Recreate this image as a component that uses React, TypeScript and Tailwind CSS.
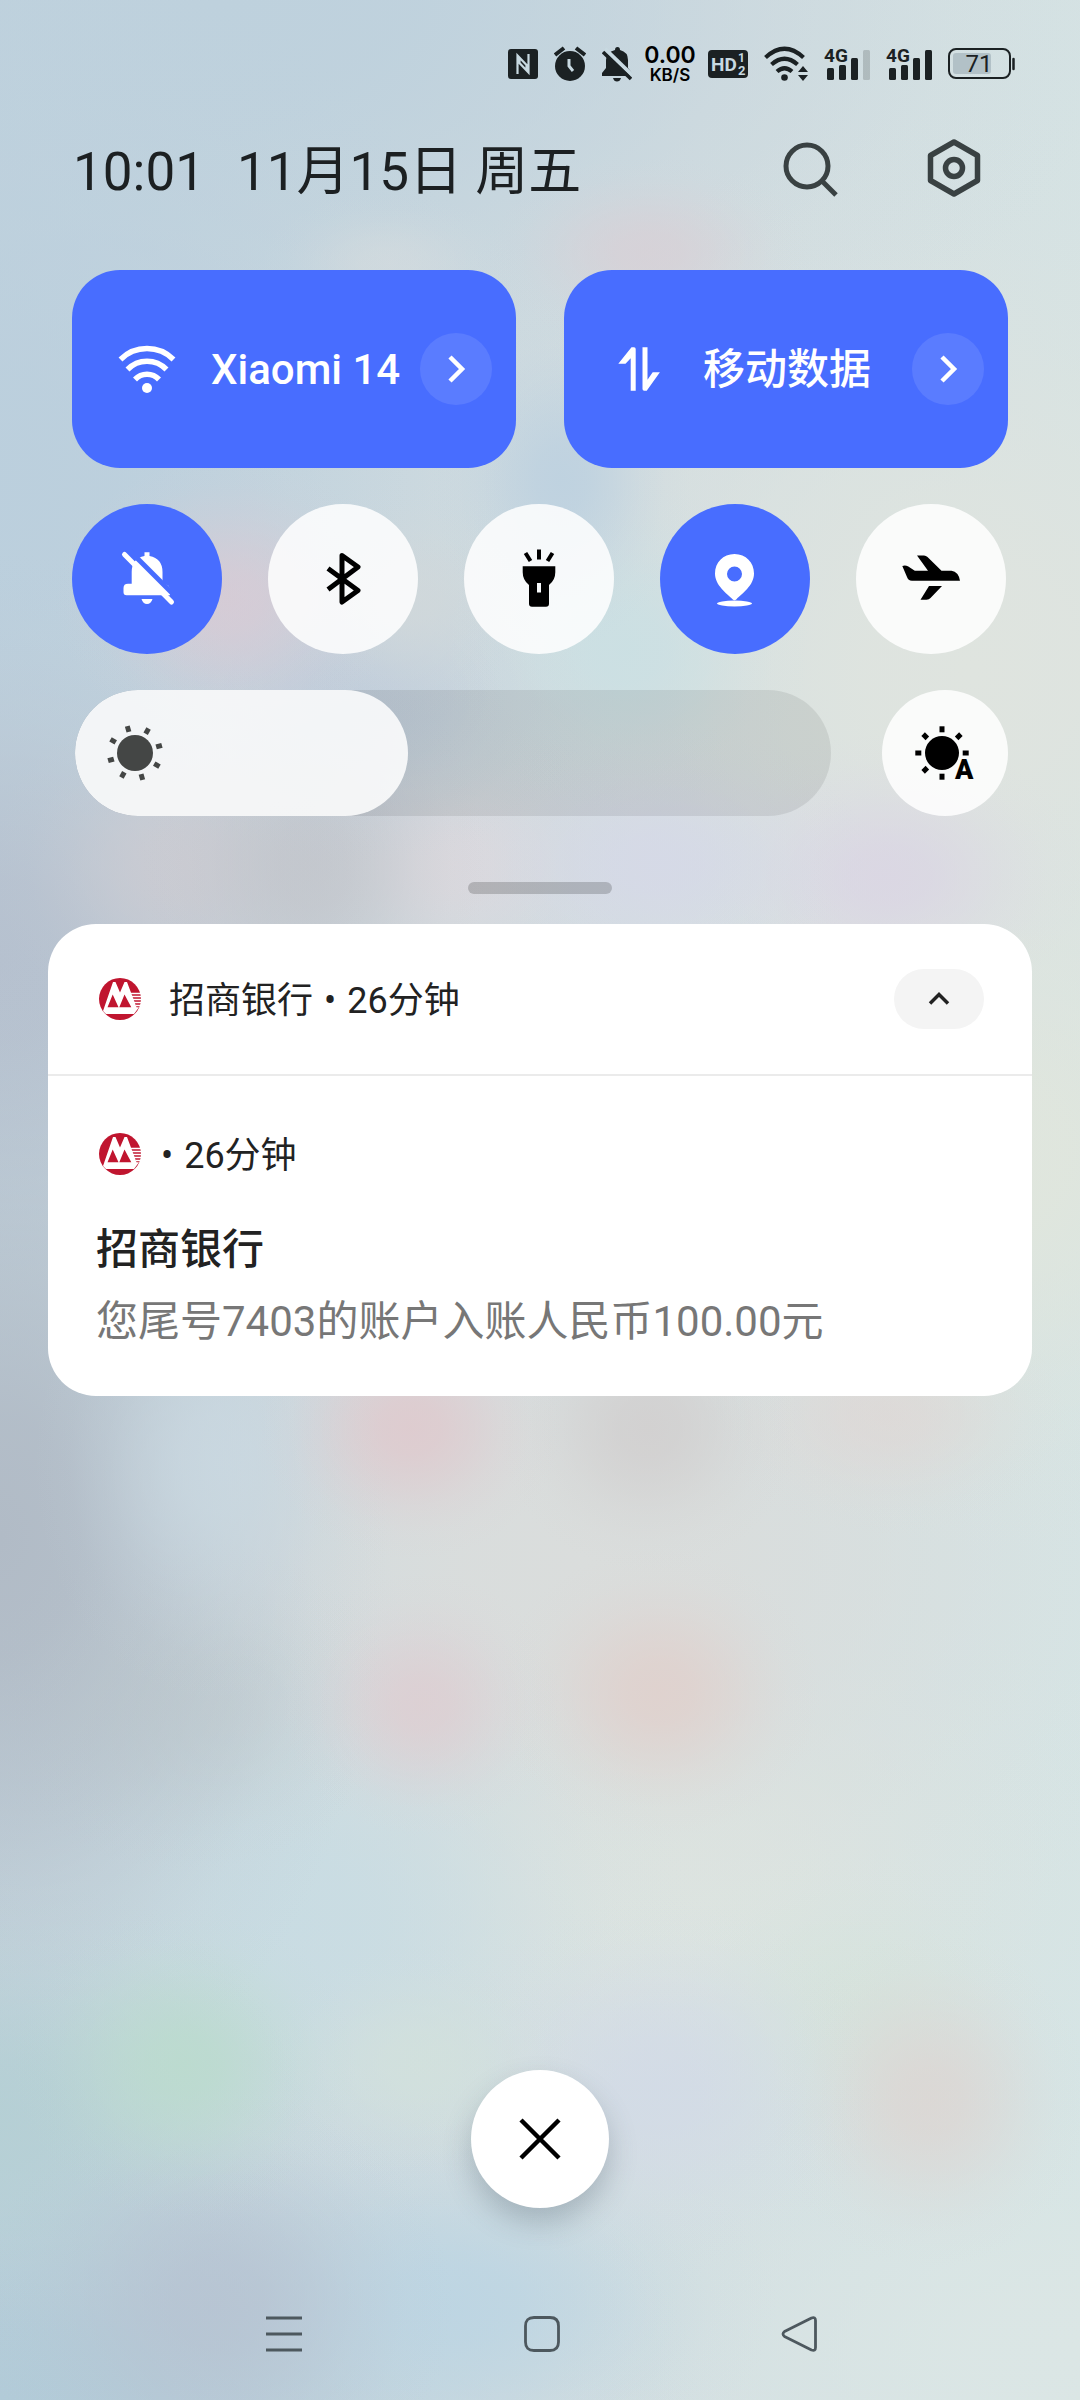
import { useState, type ReactNode } from "react";

type Blob = { x: number; y: number; rx: number; ry: number; rgb: string; a: number };

// Soft colour spots of the frosted wallpaper; x, y, rx, ry are percentages of the screen.
const blobs: Blob[] = [
  { x: 60, y: 10.5, rx: 15, ry: 4, rgb: "216,208,214", a: 0.8 },
  { x: 36, y: 11, rx: 12, ry: 3, rgb: "214,220,222", a: 0.6 },
  { x: 52, y: 20, rx: 12, ry: 7, rgb: "189,209,224", a: 0.9 },
  { x: 58, y: 27, rx: 17, ry: 7, rgb: "200,224,228", a: 0.75 },
  { x: 21, y: 25, rx: 16, ry: 6, rgb: "218,202,212", a: 0.8 },
  { x: 38, y: 25, rx: 13, ry: 5, rgb: "209,216,218", a: 0.8 },
  { x: 33, y: 29, rx: 22, ry: 7, rgb: "188,200,217", a: 0.6 },
  { x: 61, y: 36, rx: 20, ry: 6, rgb: "213,216,232", a: 0.8 },
  { x: 82, y: 36.5, rx: 19, ry: 6, rgb: "218,212,228", a: 0.8 },
  { x: 29, y: 36, rx: 16, ry: 9, rgb: "193,195,201", a: 0.75 },
  { x: 17, y: 36, rx: 18, ry: 7, rgb: "205,203,209", a: 0.8 },
  { x: 42, y: 36, rx: 17, ry: 6, rgb: "221,216,221", a: 0.8 },
  { x: 38, y: 59.5, rx: 14, ry: 5.5, rgb: "223,201,205", a: 0.85 },
  { x: 60, y: 59.5, rx: 14, ry: 6, rgb: "208,205,205", a: 0.75 },
  { x: 82, y: 59, rx: 17, ry: 5, rgb: "223,214,212", a: 0.65 },
  { x: 39, y: 71, rx: 13, ry: 5.5, rgb: "222,205,209", a: 0.8 },
  { x: 61, y: 70.5, rx: 15, ry: 6, rgb: "224,208,204", a: 0.85 },
  { x: 20, y: 61, rx: 17, ry: 10, rgb: "202,217,226", a: 0.8 },
  { x: 17, y: 71, rx: 20, ry: 7, rgb: "184,195,200", a: 0.45 },
  { x: 17, y: 86, rx: 16, ry: 6.5, rgb: "187,219,206", a: 0.9 },
  { x: 39, y: 86, rx: 15, ry: 5, rgb: "210,225,220", a: 0.8 },
  { x: 61, y: 87, rx: 21, ry: 8, rgb: "210,218,231", a: 0.8 },
  { x: 86, y: 87.5, rx: 15, ry: 7, rgb: "220,214,211", a: 0.85 },
  { x: 79, y: 84, rx: 18, ry: 7, rgb: "213,227,219", a: 0.75 },
  { x: 20, y: 96, rx: 22, ry: 9, rgb: "182,194,209", a: 0.8 },
  { x: 42, y: 96, rx: 30, ry: 8, rgb: "188,213,227", a: 0.9 },
  { x: 0, y: 88, rx: 28, ry: 10, rgb: "180,207,212", a: 0.9 },
  { x: 0, y: 64, rx: 36, ry: 25, rgb: "177,187,198", a: 1 },
  { x: 28, y: 80, rx: 36, ry: 14, rgb: "200,220,227", a: 0.9 },
  { x: 0, y: 40, rx: 34, ry: 17, rgb: "182,193,207", a: 1 },
  { x: 0, y: 20, rx: 50, ry: 22, rgb: "187,207,221", a: 0.95 },
  { x: 20, y: 0, rx: 85, ry: 20, rgb: "190,209,221", a: 1 },
  { x: 0, y: 100, rx: 65, ry: 16, rgb: "178,203,216", a: 1 },
  { x: 100, y: 98, rx: 50, ry: 12, rgb: "219,230,229", a: 1 },
  { x: 90, y: 28, rx: 50, ry: 24, rgb: "223,228,223", a: 1 },
  { x: 92, y: 48, rx: 36, ry: 17, rgb: "224,230,221", a: 1 },
  { x: 55, y: 65, rx: 60, ry: 20, rgb: "218,221,220", a: 1 },
  { x: 62, y: 78, rx: 50, ry: 13, rgb: "221,229,225", a: 1 },
];

// Bell-shaped fade from the centre of a spot to its edge: [distance %, strength].
const fade = [[0, 1], [20, 0.9], [40, 0.62], [60, 0.3], [80, 0.08], [100, 0]];

const wallpaper = blobs
  .map((b) => {
    const stops = fade.map(([at, k]) => `rgba(${b.rgb},${(b.a * k).toFixed(3)}) ${at}%`).join(",");
    return `radial-gradient(${b.rx}% ${b.ry}% at ${b.x}% ${b.y}%, ${stops})`;
  })
  .join(",");

function StatusBar() {
  return (
    <div className="flex h-10 items-center justify-end gap-4 pr-[65px] text-[#1b2123]">
      <svg width="30" height="30" viewBox="0 0 30 30" aria-label="NFC">
        <rect width="30" height="30" rx="3" fill="currentColor" />
        <path d="M9.500 25V6.500L18.500 16V21M20.500 5v18.500L11.500 14V9" fill="none" stroke="#c8d9e1" strokeWidth="2.200" />
      </svg>
      <svg width="32" height="36" viewBox="0 0 32 36" aria-label="闹钟">
        <circle cx="16" cy="20" r="15" fill="currentColor" />
        <path d="M1 9l9-7M31 9l-9-7" stroke="currentColor" strokeWidth="4" />
        <path d="M15 13v7l4 5" fill="none" stroke="#c8d9e1" strokeWidth="3" />
      </svg>
      <svg width="30" height="36" viewBox="0 0 30 36" aria-label="静音">
        <path d="M13 4q0-3 2.500-3T18 4q8 2 8 10v8l4 5v3H0v-3l4-5v-8q0-8 9-10zM11 32h8q-1 3.500-4 3.500t-4-3.500z" fill="currentColor" />
        <path d="M3 3l28 27" stroke="#c8d9e1" strokeWidth="4" />
        <path d="M1 6l28 27" stroke="currentColor" strokeWidth="3.600" />
      </svg>
      <div className="-mx-1 flex w-[52px] flex-col items-center font-[Inter,sans-serif] text-black">
        <span className="text-[23px] leading-[22px] font-semibold">0.00</span>
        <span className="text-[17px] leading-[18px] font-semibold">KB/S</span>
      </div>
      <svg width="40" height="28" viewBox="0 0 40 28" aria-label="HD 1 2" className="font-[Roboto,sans-serif] font-bold">
        <rect width="40" height="28" rx="4" fill="currentColor" />
        <text x="3" y="21" fontSize="19" fill="#c8d9e1">HD</text>
        <text x="30" y="12" fontSize="12" fill="#c8d9e1">1</text>
        <text x="30" y="25" fontSize="13" fill="#c8d9e1">2</text>
      </svg>
      <svg width="44" height="36" viewBox="0 0 44 36" aria-label="Wi-Fi">
        <g fill="none" stroke="currentColor" strokeWidth="4.200">
          <path d="M1.500 11.500Q20.500 -6 39.500 11.500" />
          <path d="M7.500 18.500Q20.500 7 33.500 18.500" />
          <path d="M13 25.500Q20.500 19 28 25.500" />
        </g>
        <circle cx="20.500" cy="31.500" r="3.300" fill="currentColor" />
        <path d="M39 20l5 6h-10zM39 35l5-6h-10z" fill="currentColor" />
      </svg>
      {[0.18, 1].map((last, i) => (
        <svg key={i} width="46" height="44" viewBox="0 -4 46 44" aria-label={`4G 卡${i + 1}`} className="font-[Roboto,sans-serif] font-bold">
          <text x="0" y="16" fontSize="19" fill="currentColor">4G</text>
          <g fill="currentColor">
            <rect x="3" y="22" width="7" height="12" rx="1.500" />
            <rect x="15" y="19" width="7" height="15" rx="1.500" />
            <rect x="27" y="12" width="7" height="22" rx="1.500" />
            <rect x="39" y="4" width="7" height="30" rx="1.500" opacity={last} />
          </g>
        </svg>
      ))}
      <svg width="67" height="32" viewBox="0 0 67 32" aria-label="电量" className="font-[Roboto,sans-serif]">
        <rect x="1" y="1" width="61" height="29" rx="7" fill="none" stroke="currentColor" strokeWidth="2" />
        <rect x="5" y="5" width="38" height="21" rx="3" fill="#b2c1c7" />
        <path d="M65.500 11v10" stroke="currentColor" strokeWidth="2.500" strokeLinecap="round" />
        <text x="31" y="24" fontSize="24" textAnchor="middle" fill="currentColor">71</text>
      </svg>
    </div>
  );
}

function WideTile({ label, icon }: { label: string; icon: ReactNode }) {
  return (
    <div className="flex h-[198px] min-w-0 flex-1 items-center rounded-[48px] bg-[#486dff] pr-6 pl-[45px] text-white">
      <button type="button" className="flex min-w-0 flex-1 items-center gap-[34px] text-left text-[42px] font-medium whitespace-nowrap">
        <svg width="60" height="60" viewBox="0 0 60 60" className="shrink-0" aria-hidden="true">{icon}</svg>
        {label}
      </button>
      <button type="button" aria-label={`${label} 详情`} className="flex size-[72px] shrink-0 items-center justify-center rounded-full bg-white/10">
        <svg width="36" height="36" viewBox="0 0 36 36" fill="none" stroke="currentColor" strokeWidth="4.500">
          <path d="M12 6l12 12-12 12" />
        </svg>
      </button>
    </div>
  );
}

function RoundToggle({ label, on, children }: { label: string; on?: boolean; children: ReactNode }) {
  return (
    <button
      type="button"
      aria-label={label}
      aria-pressed={!!on}
      className={`flex size-[150px] items-center justify-center rounded-full ${on ? "bg-[#486dff] text-white" : "bg-white/85 text-black"}`}
    >
      <svg width="60" height="60" viewBox="0 0 60 60">{children}</svg>
    </button>
  );
}

function Sun({ start, radius, distance, rays }: { start: number; radius: number; distance: number; rays: number[] }) {
  return (
    <g fill="currentColor">
      <circle cx="30" cy="30" r={radius} />
      {rays.map((n) => (
        <rect key={n} x="27.500" y={30 - distance - 3} width="5" height="6" transform={`rotate(${start + n * 45} 30 30)`} />
      ))}
    </g>
  );
}

function BankLogo() {
  return (
    <svg width="42" height="42" viewBox="0 0 42 42" className="shrink-0" role="img" aria-label="招商银行标志">
      <circle cx="21" cy="21" r="21" fill="#c0152f" />
      <path d="M4 33L14 4h2.500L21 14.500 25.500 4H28l9.500 25.300h2.500L35 36H7z" fill="#fff" />
      <path d="M13.700 16.500L8.500 29.300h11zM25.500 16.500l-5.200 12.800h12z" fill="#c0152f" />
      <path d="M32 15.500h10M33 18.500h10M34 21.500h9M35 24.500h8M36.500 27.500h6" stroke="#fff" strokeWidth="1.400" />
    </svg>
  );
}

export default function App() {
  const [brightness, setBrightness] = useState(44);
  const [open, setOpen] = useState(true);

  return (
    <div
      className="flex min-h-screen flex-col font-[Roboto,'Noto_Sans_CJK_SC',sans-serif] text-[#1c2022]"
      style={{ backgroundImage: `${wallpaper},linear-gradient(95deg,#c0d2dd,#d3dde0 55%,#d6e5e5)` }}
    >
      <div className="pt-11">
        <StatusBar />
      </div>

      <header className="mt-11 flex h-20 items-center justify-between pr-[96px] pl-[73px]">
        <h1 className="flex gap-8 pt-[10px] text-[53px] font-normal whitespace-nowrap">
          <span>10:01</span>
          <span>11月15日 周五</span>
        </h1>
        <div className="flex gap-[84px] text-[#394142]">
          <button type="button" aria-label="搜索">
            <svg width="60" height="60" viewBox="0 0 60 60" fill="none" stroke="currentColor" strokeWidth="5">
              <circle cx="27" cy="28" r="21" />
              <path d="M42 43l14 14" />
            </svg>
          </button>
          <button type="button" aria-label="设置">
            <svg width="60" height="60" viewBox="0 0 60 60" fill="none" stroke="currentColor" strokeWidth="5.500" strokeLinejoin="round">
              <path d="M30 4l23.500 13.500v25L30 56 6.500 42.500v-25z" />
              <circle cx="30" cy="30" r="8.500" />
            </svg>
          </button>
        </div>
      </header>

      <section aria-label="快捷设置" className="mt-[62px] flex flex-col gap-9 px-[72px]">
        <div className="flex gap-12">
          <WideTile
            label="Xiaomi 14"
            icon={
              <>
                <g fill="none" stroke="currentColor" strokeWidth="5.500">
                  <path d="M3.500 20.500A37.700 37.700 0 0 1 56.500 20.500" />
                  <path d="M10.500 30.500A27 27 0 0 1 49.500 30.500" />
                  <path d="M18 40.500A16.500 16.500 0 0 1 42 40.500" />
                </g>
                <circle cx="30" cy="49" r="5" fill="currentColor" />
              </>
            }
          />
          <WideTile
            label="移动数据"
            icon={
              <g fill="currentColor">
                <path d="M26.700 51.700V10q0-1.700-1.700-1.700h-2.500L9.300 24.700h7.200l5.200-5.500v32.500z" />
                <path d="M33.500 8.300V50q0 1.700 1.700 1.700h2.500L50.900 33.300h-7.200l-5.200 7.500V8.300z" />
              </g>
            }
          />
        </div>

        <div className="flex justify-between pr-0.5">
          <RoundToggle label="静音" on>
            <path d="M27.500 3.300h5V7q13 2.500 13 16v11.700q7.500 0 7.500 7v4.600H9.500q-3 0-3-3V39q0-4.300 4.500-4.300h3.700V23q0-13.500 12.800-16zM24.500 50h11q-1.500 5-5.500 5t-5.500-5z" fill="currentColor" />
            <path d="M8 -3L62 51" stroke="#486dff" strokeWidth="5" />
            <path d="M7.500 5.500L54.500 53" stroke="currentColor" strokeWidth="5" strokeLinecap="round" />
          </RoundToggle>
          <RoundToggle label="蓝牙">
            <path d="M15 19.500L45 41.500 29 53V6.500L45 18 15 40.500" fill="none" stroke="currentColor" strokeWidth="5" strokeLinejoin="round" />
          </RoundToggle>
          <RoundToggle label="手电筒">
            <path d="M30 0.500v10M16.500 4l5 8M43.500 4l-5 8" stroke="currentColor" strokeWidth="4" />
            <path fillRule="evenodd" d="M13.700 17.300h32.600v6q0 8-6.300 12.700v18.700q0 3-3 3H23q-3 0-3-3V36q-6.300-4.700-6.300-12.700zM28 34v9.500h4V34z" fill="currentColor" />
          </RoundToggle>
          <RoundToggle label="位置" on>
            <path fillRule="evenodd" d="M29.500 5C41 5 49 13.500 49 24.500c0 12-12 20-17.500 25.700q-2 2-4 0C22 44.500 10 36.500 10 24.500 10 13.500 18 5 29.500 5zm0 12.500a7.500 7.500 0 1 0 0 15 7.500 7.500 0 0 0 0-15z" fill="currentColor" />
            <ellipse cx="29.500" cy="54.500" rx="17.500" ry="2.900" fill="currentColor" />
          </RoundToggle>
          <RoundToggle label="飞行模式">
            <path d="M1.300 17q3-1 6 .5l6.500 4.200H27L16 6.500h7q2 0 3.500 1.500l14 13.700h10q7 1 8.500 10H11q-4 0-5-3.700zM28 37h13L29.500 49q-1.500 1.700-4 1.700h-6z" fill="currentColor" />
          </RoundToggle>
        </div>

        <div className="flex items-center gap-[51px] pl-[3px]">
          <div className="relative h-[126px] flex-1 overflow-hidden rounded-full bg-black/8">
            <div className="flex h-full items-center rounded-full bg-white/85 pl-[30px] text-[#444645]" style={{ width: `${brightness}%` }}>
              <svg width="60" height="60" viewBox="0 0 60 60" aria-hidden="true">
                <Sun start={-16} radius={18} distance={25} rays={[0, 1, 2, 3, 4, 5, 6, 7]} />
              </svg>
            </div>
            <input
              type="range"
              aria-label="亮度"
              min={16}
              max={100}
              value={brightness}
              onChange={(e) => setBrightness(Number(e.target.value))}
              className="absolute inset-0 size-full cursor-pointer opacity-0"
            />
          </div>
          <button type="button" aria-label="自动亮度" className="flex size-[126px] items-center justify-center rounded-full bg-white/85 text-black">
            <svg width="66" height="66" viewBox="0 -3 66 66" className="font-[Roboto,sans-serif] font-black">
              <Sun start={0} radius={17} distance={23.7} rays={[0, 1, 2, 4, 5, 6, 7]} />
              <text x="43" y="56" fontSize="27" fill="currentColor">A</text>
            </svg>
          </button>
        </div>
      </section>

      <div className="mx-auto mt-[66px] h-3 w-36 rounded-full bg-black/18" />

      <article className="mx-12 mt-[30px] overflow-hidden rounded-[48px] bg-white text-[#222]">
        <div className="flex h-[150px] items-center pr-12 pl-[51px] text-[36px]">
          <BankLogo />
          <p className="ml-7 flex gap-[11px] pt-1">
            <span>招商银行</span>
            <span>•</span>
            <span>26分钟</span>
          </p>
          <button
            type="button"
            aria-label="收起"
            aria-expanded={open}
            onClick={() => setOpen(!open)}
            className="ml-auto flex h-[60px] w-[90px] items-center justify-center rounded-full bg-[#f4f4f4]"
          >
            <svg width="30" height="30" viewBox="0 0 30 30" fill="none" stroke="currentColor" strokeWidth="3.500">
              <path d="M6 19.500l9-9 9 9" />
            </svg>
          </button>
        </div>
        {open && (
          <div className="border-t-2 border-[#ebebeb] px-12 pt-[50px] pb-10">
            <div className="flex h-14 items-center pl-[3px] text-[36px]">
              <BankLogo />
              <p className="ml-5 flex gap-[11px] pt-1">
                <span>•</span>
                <span>26分钟</span>
              </p>
            </div>
            <h2 className="mt-9 text-[42px] leading-[64px] font-medium">招商银行</h2>
            <p className="mt-1.5 text-[42px] leading-[68px] text-[#777]">您尾号7403的账户入账人民币100.00元</p>
          </div>
        )}
      </article>

      <button
        type="button"
        aria-label="清除全部通知"
        className="mx-auto mt-auto flex size-[138px] shrink-0 items-center justify-center rounded-full bg-white text-black shadow-[0_14px_28px_rgba(60,80,95,0.28)]"
      >
        <svg width="48" height="48" viewBox="0 0 48 48" stroke="currentColor" strokeWidth="4.500">
          <path d="M5 5l38 38M43 5L5 43" />
        </svg>
      </button>

      <nav aria-label="导航" className="mt-[102px] grid grid-cols-3 pr-[151px] pb-[42px] pl-[155px] text-[#4d585e]">
        {[
          { label: "最近任务", d: "M2 4h36M2 20h36M2 36h36" },
          { label: "主屏幕", d: "M12 3.500h16q8.500 0 8.500 8.500v16q0 8.500-8.500 8.500H12q-8.500 0-8.500-8.500V12q0-8.500 8.500-8.500z" },
          { label: "返回", d: "M4.500 17.500L31.500 4q4-1.500 4 2.500v27q0 4-4 2.500L4.500 22.500q-3-2.500 0-5z" },
        ].map((item) => (
          <button key={item.label} type="button" aria-label={item.label} className="flex h-12 items-center justify-center">
            <svg width="40" height="40" viewBox="0 0 40 40" fill="none" stroke="currentColor" strokeWidth="2.800" strokeLinejoin="round">
              <path d={item.d} />
            </svg>
          </button>
        ))}
      </nav>
    </div>
  );
}
